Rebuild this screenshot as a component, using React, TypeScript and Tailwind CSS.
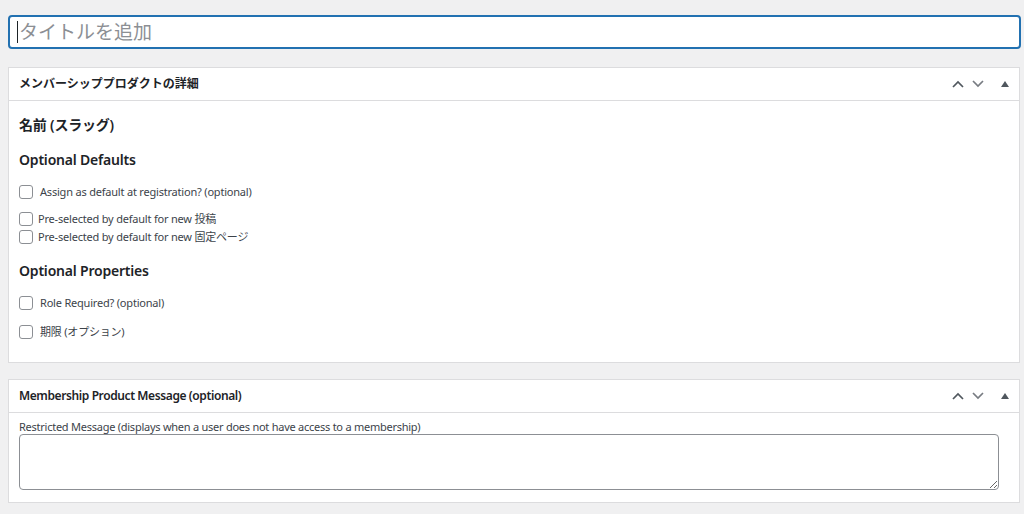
import React from "react";

const FONT = '"Noto Sans", "Noto Sans CJK JP", sans-serif';

function Chevron({ up, color }: { up?: boolean; color: string }) {
  return (
    <svg width="14" height="10" viewBox="0 0 14 10" fill="none">
      <path
        d={up ? "M2 8 L7 3 L12 8" : "M2 2 L7 7 L12 2"}
        stroke={color}
        strokeWidth="1.7"
      />
    </svg>
  );
}

function PanelHeader({ title, en }: { title: string; en?: boolean }) {
  return (
    <div className="flex h-[33px] items-center justify-between border-b border-[#dcdcde] pl-[10px] pr-[4px]">
      <h2
        className={
          en
            ? "text-[12px] font-semibold tracking-[-0.4px] text-[#1d2327]"
            : "text-[12px] font-semibold text-[#1d2327]"
        }
      >
        {title}
      </h2>
      <div className="flex items-center">
        <span className="flex w-[20px] justify-center">
          <Chevron up color="#50575e" />
        </span>
        <span className="flex w-[20px] justify-center">
          <Chevron color="#787c82" />
        </span>
        <span className="ml-[7px] flex w-[20px] justify-center">
          <svg width="8" height="6" viewBox="0 0 8 6">
            <path d="M4 0 L8 6 L0 6 Z" fill="#50575e" />
          </svg>
        </span>
      </div>
    </div>
  );
}

function Box() {
  return (
    <span className="inline-block h-[14px] w-[14px] shrink-0 rounded-[3px] border border-[#8c8f94] bg-white" />
  );
}

const LABEL = "text-[11px] tracking-[-0.2px]";
const HEAD = "h-[20px] text-[14px] font-semibold leading-[20px] tracking-[-0.2px] text-[#1d2327]";

export default function App() {
  return (
    <div
      className="min-h-[514px] bg-[#f0f0f1] pl-[8px] pr-[3px] pt-[15px]"
      style={{ fontFamily: FONT }}
    >
      <div className="flex h-[34px] items-center rounded-[4px] border-2 border-[#2271b1] bg-white pl-[7px]">
        <span className="mr-[1px] h-[22px] w-[1px] bg-[#1d2327]" />
        <span className="text-[19px] leading-none text-[#8c8f94]">タイトルを追加</span>
      </div>

      <div className="mr-[1px] mt-[18px] border border-[#dcdcde] bg-white">
        <PanelHeader title="メンバーシッププロダクトの詳細" />
        <div className="pb-[20px] pl-[10px] pt-[14px] text-[#3c434a]">
          <div className={HEAD}>名前 (スラッグ)</div>
          <div className={"mt-[15px] " + HEAD}>Optional Defaults</div>
          <label className={"mt-[12px] flex h-[20px] items-center gap-[7px] " + LABEL}>
            <Box />
            <span>Assign as default at registration? (optional)</span>
          </label>
          <label className={"mt-[8px] flex h-[18px] items-center gap-[5px] " + LABEL}>
            <Box />
            <span>Pre-selected by default for new 投稿</span>
          </label>
          <label className={"flex h-[18px] items-center gap-[5px] " + LABEL}>
            <Box />
            <span>Pre-selected by default for new 固定ページ</span>
          </label>
          <div className={"mt-[15px] " + HEAD}>Optional Properties</div>
          <label className={"mt-[12px] flex h-[20px] items-center gap-[7px] " + LABEL}>
            <Box />
            <span>Role Required? (optional)</span>
          </label>
          <label className={"mt-[9px] flex h-[20px] items-center gap-[7px] " + LABEL}>
            <Box />
            <span>期限 (オプション)</span>
          </label>
        </div>
      </div>

      <div className="mr-[1px] mt-[16px] border border-[#dcdcde] bg-white">
        <PanelHeader title="Membership Product Message (optional)" en />
        <div className="pb-[12px] pl-[10px] pt-[7px]">
          <div className="h-[14px] text-[11px] leading-[14px] tracking-[-0.25px] text-[#3c434a]">
            Restricted Message (displays when a user does not have access to a membership)
          </div>
          <textarea className="mt-0 block h-[56px] w-[980px] rounded-[4px] border border-[#8c8f94] bg-white" />
        </div>
      </div>
    </div>
  );
}
